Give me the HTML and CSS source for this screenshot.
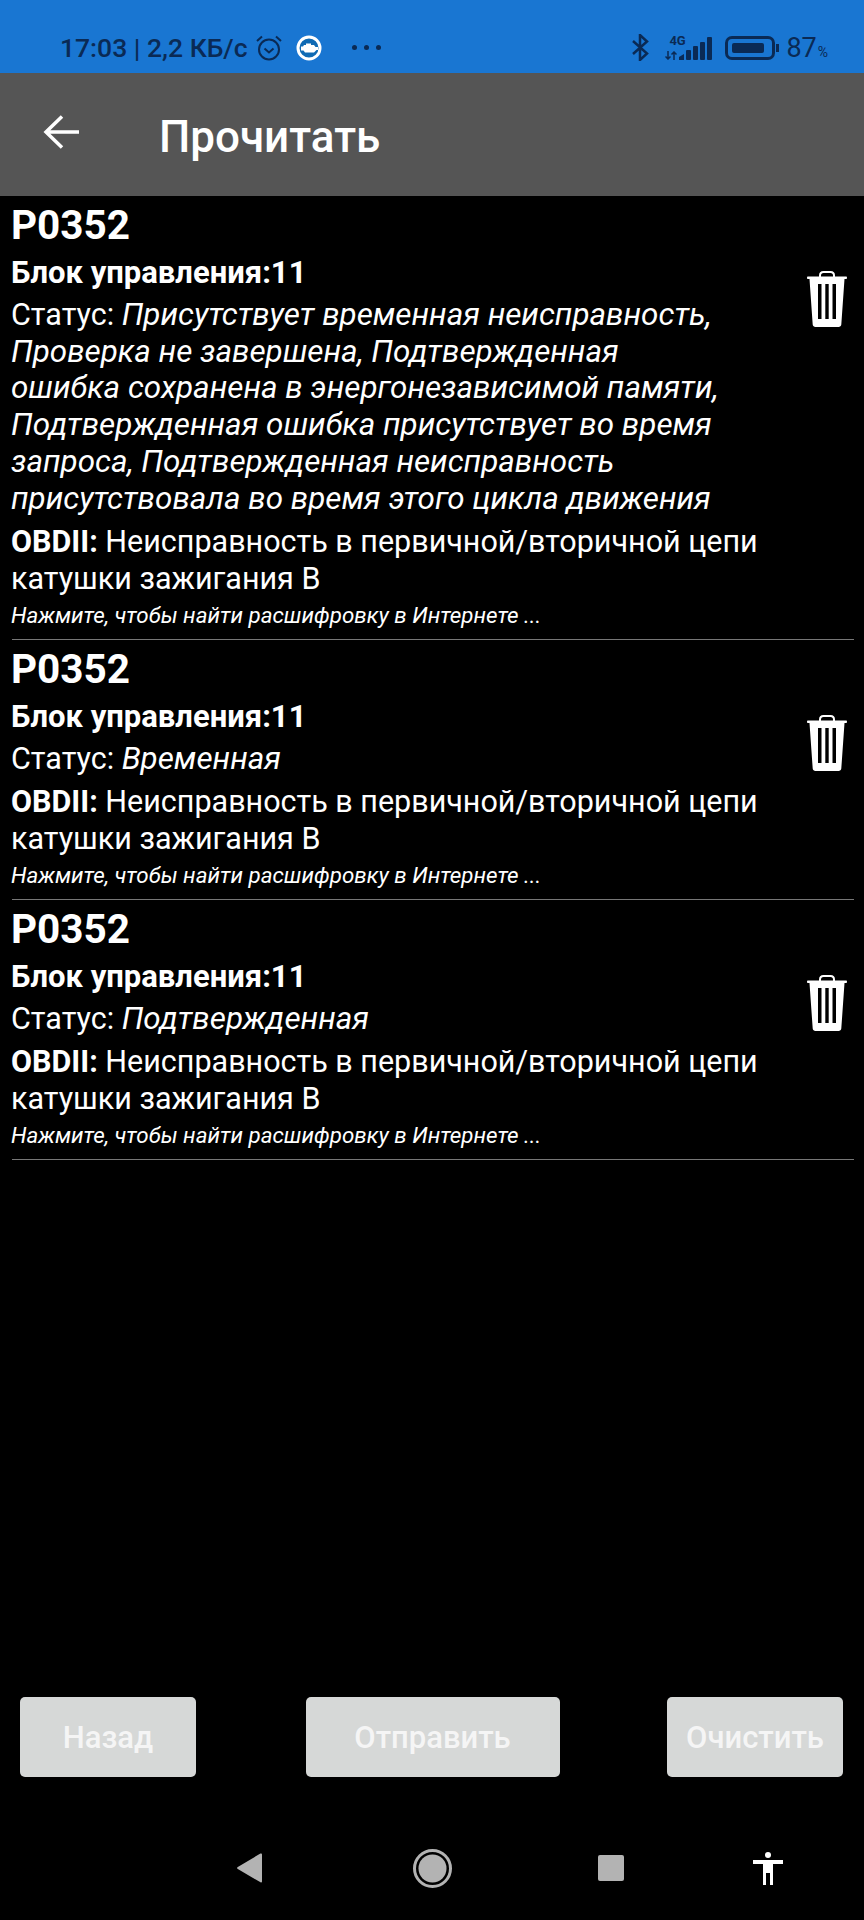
FILE: index.html
```html
<!DOCTYPE html>
<html lang="ru">
<head>
    <meta charset="UTF-8">
    <meta name="viewport" content="width=device-width, initial-scale=1.0">
    <title>Прочитать</title>
    <link rel="stylesheet" href="styles.css">
</head>
<body>
    <svg class="defs" width="0" height="0">
        <symbol id="trash" viewBox="0 0 40 56">
            <path d="M13 6V4.5C13 2.5 14.5 1 16.5 1h7C25.500 1 27 2.500 27 4.500V6" fill="none" stroke="#fff" stroke-width="2"/>
            <path fill-rule="evenodd" d="M1 5.500h38c.600 0 1 .500 1 1.200 0 .800-.400 1.300-1 1.300h-1.500l-3.200 45.500c-.100 1.500-1.300 2.500-2.800 2.500H8.500c-1.500 0-2.700-1-2.800-2.500L2.500 8H1c-.600 0-1-.500-1-1.300 0-.700.400-1.200 1-1.200zM11 13v35h3.500V13zM18.300 13v35h3.400V13zM25.500 13v35H29V13z" fill="#fff"/>
        </symbol>
    </svg>

    <div class="status-bar">
        <span class="status-time">17:03 | 2,2 КБ/с</span>
        <svg class="alarm" width="28" height="28" viewBox="0 0 28 28" fill="none" stroke="#0a2a55" stroke-width="2">
            <circle cx="14" cy="15.500" r="10"/>
            <path d="M9.500 14.500l4.500 4 4.500-4M2 7l5-4.500M26 7l-5-4.500"/>
        </svg>
        <svg class="cloud" width="26" height="26" viewBox="0 0 26 26">
            <circle cx="13" cy="13" r="11" fill="#0f6ab4" stroke="#fff" stroke-width="3"/>
            <path d="M5 11.500h2l1-1.500h2V8.500h5V10h3l1.500 2H22v3h-1.500L18 17.500H9L7.500 15.500H5z" fill="#fff"/>
        </svg>
        <span class="dots"><i></i><i></i><i></i></span>
        <span class="status-right">
            <svg class="bluetooth" width="17" height="27" viewBox="0 0 17 27" fill="none" stroke="#0a2a55" stroke-width="2.500">
                <path d="M1 7l14 12.500L8 26V1l7 6.500L1 20"/>
            </svg>
            <span class="signal">
                <span class="net">
                    <span class="net-label">4G</span>
                    <svg width="12" height="9" viewBox="0 0 12 9" fill="none" stroke="#0a2a55" stroke-width="1.500">
                        <path d="M3 0v8M0.500 5.500L3 8l2.500-2.500M9 9V1M6.500 3.500L9 1l2.500 2.500"/>
                    </svg>
                </span>
                <svg width="33" height="23" viewBox="0 0 33 23" fill="#0a2a55">
                    <path d="M0 23v-3l5-3v6z"/>
                    <rect x="7" y="13" width="5" height="10" rx="1"/>
                    <rect x="14" y="9" width="5" height="14" rx="1"/>
                    <rect x="21" y="5" width="5" height="18" rx="1"/>
                    <rect x="28" y="0" width="5" height="23" rx="1"/>
                </svg>
            </span>
            <span class="battery"><span class="battery-level"></span></span>
            <span class="battery-nub"></span>
            <span class="battery-text">87<small>%</small></span>
        </span>
    </div>

    <div class="app-bar">
        <svg class="back-arrow" width="36" height="34" viewBox="0 0 36 34" fill="none" stroke="#fff" stroke-width="3.500">
            <path d="M36 17H3M19 1.500L3 17l16 15.500"/>
        </svg>
        <h1>Прочитать</h1>
    </div>

    <div class="list">
        <div class="item">
            <div class="item-text">
                <div class="code">P0352</div>
                <div class="block-line">Блок управления:11</div>
                <div class="line status">Статус: <em>Присутствует временная неисправность,<br>Проверка не завершена, Подтвержденная<br>ошибка сохранена в энергонезависимой памяти,<br>Подтвержденная ошибка присутствует во время<br>запроса, Подтвержденная неисправность<br>присутствовала во время этого цикла движения</em></div>
                <div class="line obd"><b>OBDII:</b> Неисправность в первичной/вторичной цепи<br>катушки зажигания B</div>
                <div class="hint">Нажмите, чтобы найти расшифровку в Интернете ...</div>
            </div>
            <svg class="trash" width="40" height="56"><use href="#trash"/></svg>
        </div>
        <div class="item">
            <div class="item-text">
                <div class="code">P0352</div>
                <div class="block-line">Блок управления:11</div>
                <div class="line status">Статус: <em>Временная</em></div>
                <div class="line obd"><b>OBDII:</b> Неисправность в первичной/вторичной цепи<br>катушки зажигания B</div>
                <div class="hint">Нажмите, чтобы найти расшифровку в Интернете ...</div>
            </div>
            <svg class="trash" width="40" height="56"><use href="#trash"/></svg>
        </div>
        <div class="item">
            <div class="item-text">
                <div class="code">P0352</div>
                <div class="block-line">Блок управления:11</div>
                <div class="line status">Статус: <em>Подтвержденная</em></div>
                <div class="line obd"><b>OBDII:</b> Неисправность в первичной/вторичной цепи<br>катушки зажигания B</div>
                <div class="hint">Нажмите, чтобы найти расшифровку в Интернете ...</div>
            </div>
            <svg class="trash" width="40" height="56"><use href="#trash"/></svg>
        </div>
    </div>

    <div class="actions">
        <button class="btn-small">Назад</button>
        <button class="btn-wide">Отправить</button>
        <button class="btn-small">Очистить</button>
    </div>

    <div class="nav-bar">
        <svg class="nav-back" width="25" height="30" viewBox="0 0 25 30"><path d="M24 0.500c.600 0 1 .500 1 1v27c0 1-.800 1.300-1.500.800L.800 16c-1-.600-1-1.400 0-2L23 .800c.300-.200.600-.300 1-.300z" fill="#b3b3b3"/></svg>
        <svg class="nav-home" width="39" height="39" viewBox="0 0 39 39"><circle cx="19.500" cy="19.500" r="18" fill="none" stroke="#b3b3b3" stroke-width="3"/><circle cx="19.500" cy="19.500" r="14" fill="#b3b3b3"/></svg>
        <span class="nav-square"></span>
        <svg class="nav-person" width="30" height="33" viewBox="0 0 30 33" fill="#fff"><circle cx="15" cy="3" r="3"/><path d="M0 8h30v4H20v21h-3V21h-4v12h-3V12H0z"/></svg>
    </div>
</body>
</html>
```

FILE: styles.css
```css
html, body {
    margin: 0;
    padding: 0;
}

body {
    width: 864px;
    height: 1920px;
    display: flex;
    flex-direction: column;
    background-color: #000;
    color: #fff;
    font-family: Roboto, "Noto Sans", sans-serif;
    overflow: hidden;
}

.defs {
    display: block;
    height: 0;
}

.status-bar {
    height: 73px;
    flex: none;
    display: flex;
    align-items: center;
    padding: 22px 36px 0 60px;
    box-sizing: border-box;
    background-color: #1976d2;
    color: #0a2a55;
}

.status-time {
    font-size: 26.500px;
    font-weight: 500;
}

.alarm {
    margin-left: 7px;
}

.cloud {
    margin-left: 13px;
}

.dots {
    display: flex;
    gap: 7px;
    margin-left: 30px;
}

.dots i {
    width: 5px;
    height: 5px;
    border-radius: 50%;
    background-color: #0a2a55;
}

.status-right {
    margin-left: auto;
    display: flex;
    align-items: center;
}

.signal {
    display: flex;
    align-items: flex-end;
    margin-left: 16px;
    gap: 2px;
}

.net {
    width: 12px;
    display: flex;
    flex-direction: column;
    gap: 5px;
}

.net-label {
    margin-left: 4px;
    font-size: 13px;
    line-height: 10px;
    font-weight: 700;
    white-space: nowrap;
}

.battery {
    width: 50px;
    height: 24px;
    margin-left: 13px;
    padding: 4px;
    box-sizing: border-box;
    border: 3px solid #0a2a55;
    border-radius: 7px;
}

.battery-level {
    display: block;
    width: 87%;
    height: 100%;
    border-radius: 2px;
    background-color: #0a2a55;
}

.battery-nub {
    width: 3px;
    height: 8px;
    margin-left: 1px;
    background-color: #0a2a55;
}

.battery-text {
    margin-left: 7px;
    font-size: 27px;
    white-space: nowrap;
}

.battery-text small {
    font-size: 14px;
    margin-left: 1px;
}

.app-bar {
    height: 123px;
    flex: none;
    display: flex;
    align-items: center;
    padding-left: 43px;
    box-sizing: border-box;
    background-color: #555;
}

.back-arrow {
    margin-top: -6px;
}

.app-bar h1 {
    margin: 4px 0 0 80px;
    font-size: 44px;
    font-weight: 500;
}

.list {
    flex: 1;
    padding: 0 10px 0 12px;
}

.item {
    display: flex;
    justify-content: space-between;
    padding-bottom: 9px;
    border-bottom: 1px solid #777;
}

.item-text {
    margin-left: -1px;
}

.trash {
    flex: none;
    margin: 75px 7px 0 0;
}

.code {
    font-size: 40.500px;
    font-weight: 700;
    line-height: 58px;
}

.block-line {
    font-size: 31px;
    font-weight: 700;
    line-height: 38px;
}

.line {
    font-size: 30.500px;
    line-height: 36.700px;
}

.line em {
    font-size: 31.400px;
}

.status {
    margin-top: 5px;
}

.obd {
    margin-top: 7px;
}

.hint {
    margin-top: 2px;
    font-size: 22.400px;
    font-style: italic;
    line-height: 30px;
}

.actions {
    flex: none;
    display: flex;
    justify-content: space-between;
    padding: 0 21px 0 20px;
    margin-bottom: 53px;
}

.actions button {
    height: 80px;
    border: none;
    border-radius: 5px;
    background-color: #d6d8d7;
    color: #f5f5f5;
    font-family: Roboto, "Noto Sans", sans-serif;
    font-size: 31px;
    font-weight: 500;
}

.btn-small {
    width: 176px;
}

.btn-wide {
    width: 254px;
    margin-left: 2px;
}

.nav-bar {
    height: 76px;
    flex: none;
    display: flex;
    align-items: center;
    padding-left: 237px;
    margin-bottom: 14px;
    box-sizing: border-box;
}

.nav-home {
    margin-left: 151px;
}

.nav-square {
    width: 26px;
    height: 26px;
    margin-left: 146px;
    border-radius: 2px;
    background-color: #b3b3b3;
}

.nav-person {
    margin-left: 129px;
}
```
